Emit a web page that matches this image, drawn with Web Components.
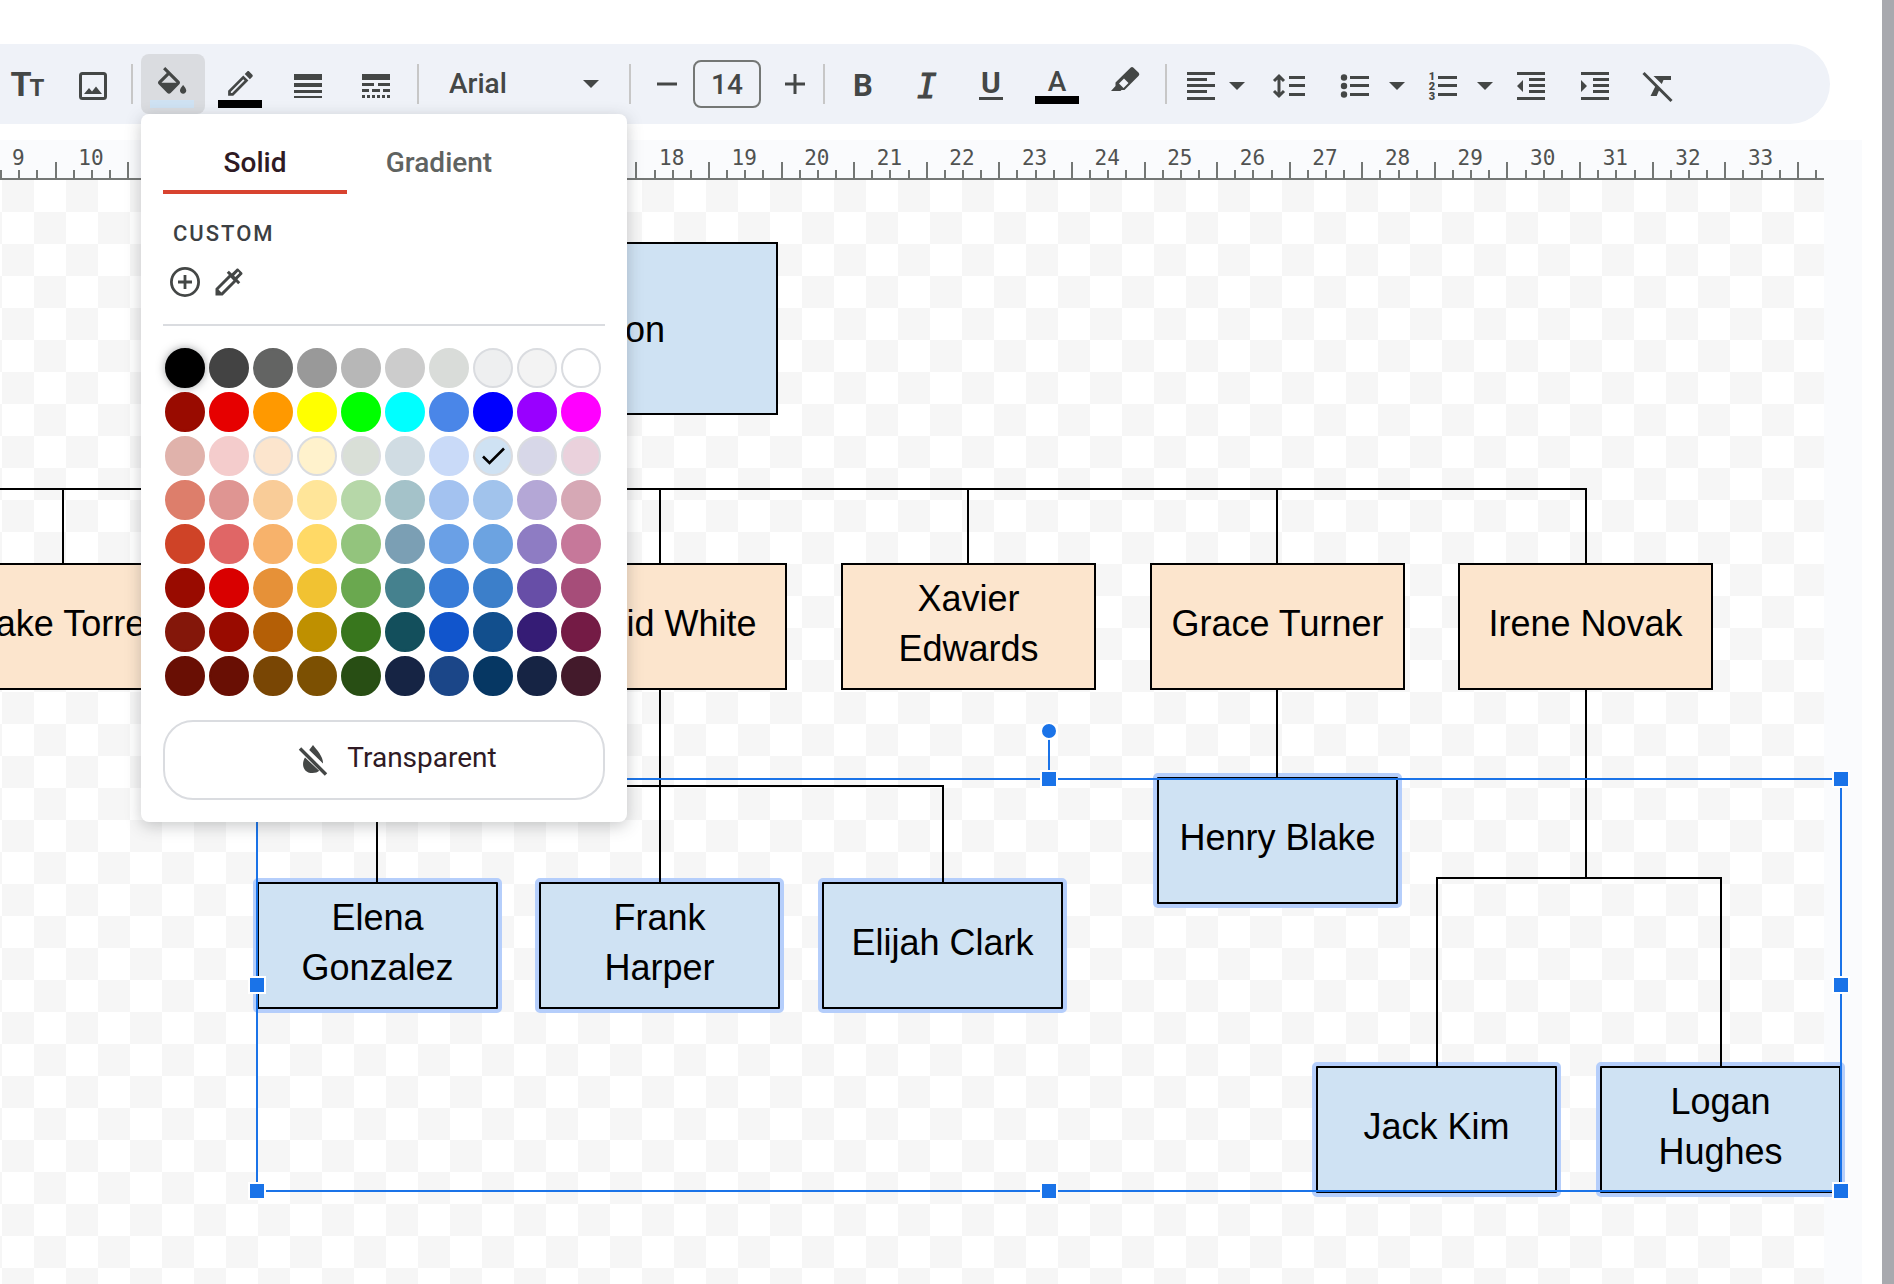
<!DOCTYPE html>
<html lang="en">
<head>
<meta charset="utf-8" />
<meta name="viewport" content="width=device-width, initial-scale=1" />
<title>Org chart drawing</title>
<style>
  body {
    margin: 0;
    font-family: Roboto, sans-serif;
    color: #444746;
    background: #fff;
  }
</style>
</head>
<body>
<drawing-app>
  <tool-bar slot="toolbar">
    <tool-group class="first">
      <tool-button icon="textsize" label="Text size"></tool-button>
      <tool-button icon="image" label="Insert image"></tool-button>
    </tool-group>
    <tool-group class="spaced">
      <tool-button icon="fill" label="Fill color" active></tool-button>
      <tool-button icon="pencil" label="Border color"></tool-button>
      <tool-button icon="weight" label="Border weight"></tool-button>
      <tool-button icon="dash" label="Border dash"></tool-button>
    </tool-group>
    <tool-group><font-picker></font-picker></tool-group>
    <tool-group><font-size></font-size></tool-group>
    <tool-group>
      <tool-button icon="bold" label="Bold"></tool-button>
      <tool-button icon="italic" label="Italic"></tool-button>
      <tool-button icon="underline" label="Underline"></tool-button>
      <tool-button class="wide" icon="textcolor" label="Text color"></tool-button>
      <tool-button class="wide" icon="highlight" label="Highlight color"></tool-button>
    </tool-group>
    <tool-group class="last">
      <tool-button class="narrow" icon="align" label="Align"></tool-button>
      <tool-button class="arrow" icon="arrow" label="Align options"></tool-button>
      <tool-button class="push" icon="spacing" label="Line spacing"></tool-button>
      <tool-button class="narrow near" icon="bullets" label="Bulleted list"></tool-button>
      <tool-button class="arrow near" icon="arrow" label="Bullet options"></tool-button>
      <tool-button class="narrow far" icon="numbers" label="Numbered list"></tool-button>
      <tool-button class="arrow near" icon="arrow" label="Number options"></tool-button>
      <tool-button class="near" icon="outdent" label="Decrease indent"></tool-button>
      <tool-button icon="indent" label="Increase indent"></tool-button>
      <tool-button icon="clear" label="Clear formatting"></tool-button>
    </tool-group>
  </tool-bar>

  <ruler-strip slot="ruler" from="9" to="33" covered="11 17"></ruler-strip>

  <drawing-board slot="board">
    <org-node box="512 62 266 173" fill="#cfe2f3" root>on</org-node>
    <org-node box="-64 383 255 127">Blake Torres</org-node>
    <org-node box="532 383 255 127">David White</org-node>
    <org-node box="841 383 255 127">Xavier<br />Edwards</org-node>
    <org-node box="1150 383 255 127">Grace Turner</org-node>
    <org-node box="1458 383 255 127">Irene Novak</org-node>
    <org-node box="257 702 241 127" fill="#cfe2f3" selected>Elena<br />Gonzalez</org-node>
    <org-node box="539 702 241 127" fill="#cfe2f3" selected>Frank<br />Harper</org-node>
    <org-node box="822 702 241 127" fill="#cfe2f3" selected>Elijah Clark</org-node>
    <org-node box="1157 597 241 127" fill="#cfe2f3" selected>Henry Blake</org-node>
    <org-node box="1316 886 241 127" fill="#cfe2f3" selected>Jack Kim</org-node>
    <org-node box="1600 886 241 127" fill="#cfe2f3" selected>Logan<br />Hughes</org-node>
    <selection-frame slot="selection"></selection-frame>
  </drawing-board>

  <color-popup slot="popup"></color-popup>
</drawing-app>

<script>
const INK = "#444746";

// toolbar icons, all on a 48 x 56 frame
const icons = {
  textsize: `<text x="18" y="40" font-size="34" font-weight="700">T</text>
    <text x="34" y="40" font-size="24" font-weight="700">T</text>`,
  image: `<rect x="11.500" y="17.500" width="25" height="25" rx="2" fill="none" stroke="${INK}" stroke-width="3"/>
    <path d="M15 38l5-6 3 3.500 4-5 6 7.500z"/>`,
  fill: `<path transform="translate(4.300 11) scale(1.570)" d="M16.560 8.940L7.620 0 6.210 1.410l2.380 2.380-5.150 5.150c-.59.59-.59 1.540 0 2.120l5.500 5.500c.29.29.68.44 1.060.44s.77-.15 1.060-.44l5.500-5.500c.59-.58.59-1.530 0-2.120zM5.210 10L10 5.210 14.790 10H5.210zM19 11.500s-2 2.170-2 3.500c0 1.100.9 2 2 2s2-.9 2-2c0-1.330-2-3.500-2-3.500z"/>
    <rect x="1" y="44" width="44" height="8" fill="#cfe2f3"/>`,
  pencil: `<path transform="translate(7 11) scale(1.370)" d="M14.060 9.020l.92.92L5.920 19H5v-.92l9.060-9.060M17.660 3c-.25 0-.51.1-.7.29l-1.830 1.830 3.750 3.750 1.830-1.830c.39-.39.39-1.020 0-1.410l-2.340-2.340c-.2-.2-.45-.29-.71-.29zm-3.600 3.190L3 17.250V21h3.750L17.810 9.940l-3.750-3.750z"/>
    <rect x="1" y="44" width="44" height="8" fill="#000"/>`,
  weight: `<path d="M9 18h28v6H9zM9 27h28v4H9zM9 34h28v3H9zM9 40h28v2H9z"/>`,
  dash: `<path d="M9 18h28v6H9zM9 27h12v3H9zM25 27h12v3H25zM9 33h7v3H9zM19 33h8v3h-8zM30 33h7v3h-7zM9 39h3v3H9zM14 39h3v3h-3zM19 39h3v3h-3zM24 39h3v3h-3zM29 39h3v3h-3zM34 39h3v3h-3z"/>`,
  bold: `<text x="24" y="40" font-size="31" font-weight="700">B</text>`,
  italic: `<text x="24" y="42" font-size="33" font-style="italic" font-family="DejaVu Sans Mono" stroke="${INK}" stroke-width="1">I</text>`,
  underline: `<text x="24" y="37" font-size="30" font-weight="700">U</text>
    <rect x="12" y="41" width="24" height="3"/>`,
  textcolor: `<text x="24" y="35" font-size="28" font-weight="500">A</text>
    <rect x="2" y="40" width="44" height="8" fill="#000"/>`,
  highlight: `<path fill-rule="evenodd" d="M29.500 11.700q1.500-1.300 3 0l5.200 5q1.300 1.500 0 3L23.500 34h-3l-1 1H10l4.500-5v-3.500zM18 27.500l4.500 4.500 5-5-4.500-4.500z"/>`,
  align: `<path d="M10 16h28v3H10zM10 22h20v3H10zM10 28h28v3H10zM10 34h20v3H10zM10 41h28v3H10z"/>`,
  spacing: `<path d="M24 20h16v3H24zM24 28h16v3H24zM24 37h16v3H24z"/>
    <path d="M9 25l5-5 5 5M9 35l5 5 5-5M14 20v20" fill="none" stroke="${INK}" stroke-width="3"/>`,
  bullets: `<circle cx="13" cy="21.500" r="3.200"/><circle cx="13" cy="30" r="3.200"/><circle cx="13" cy="38.500" r="3.200"/>
    <path d="M19 20h19v3H19zM19 28h19v3H19zM19 37h19v3H19z"/>`,
  numbers: `<g font-size="11" font-weight="900"><text x="13" y="24">1</text><text x="13" y="34">2</text><text x="13" y="44">3</text></g>
    <path d="M19 20h19v3H19zM19 28h19v3H19zM19 37h19v3H19z"/>`,
  outdent: `<path d="M10 16h28v3H10zM22 22h16v3H22zM22 28h16v3H22zM22 34h16v3H22zM10 41h28v3H10zM16 24v12l-6-6z"/>`,
  indent: `<path d="M10 16h28v3H10zM22 22h16v3H22zM22 28h16v3H22zM22 34h16v3H22zM10 41h28v3H10zM10 24v12l6-6z"/>`,
  clear: `<path d="M18.500 20H36v4h-7.500l-1.700 4zM21 29l3.700 3.700-3 7.300H15.500z"/>
    <path d="M8.500 17l28 28" stroke="${INK}" stroke-width="3"/>`,
  arrow: `<path d="M16 26h16l-8 8z"/>`,
};

class BaseElement extends HTMLElement {
  connectedCallback() {
    if (this.shadowRoot) return;
    this.attachShadow({ mode: "open" });
    const template = document.createElement("template");
    template.innerHTML = this.render();
    this.shadowRoot.appendChild(template.content.cloneNode(true));
  }
}

class DrawingApp extends BaseElement {
  render() {
    return `
    <style>
      :host {
        display: flex;
        box-sizing: border-box;
        min-height: 100vh;
        position: relative;
        overflow: hidden;
        border-right: 12px solid #a8a9ae;
      }
      main { flex: 1; min-width: 0; display: flex; flex-direction: column; padding-top: 44px; }
      .work {
        flex: 1;
        display: flex;
        flex-direction: column;
        margin: 16px 20px 0 0;
        padding-right: 38px;
        background: #fafbfd;
      }
    </style>
    <main>
      <slot name="toolbar"></slot>
      <div class="work"><slot name="ruler"></slot><slot name="board"></slot></div>
    </main>
    <slot name="popup"></slot>`;
  }
}

class ToolBar extends BaseElement {
  render() {
    return `
    <style>
      :host {
        display: flex;
        align-items: center;
        height: 80px;
        margin-right: 52px;
        border-radius: 0 40px 40px 0;
        background: #eff2f8;
      }
      ::slotted(*) { margin-right: 6px; }
      ::slotted(.first) { --gap: 2px; margin-left: -5px; }
      ::slotted(.spaced) { --gap: 4px; padding-left: 2px; }
    </style>
    <slot></slot>`;
  }
}

class ToolGroup extends BaseElement {
  render() {
    return `
    <style>
      :host { display: flex; align-items: center; }
      .items { display: flex; align-items: center; gap: var(--gap, 0); }
      .rule { width: 2px; height: 40px; margin-left: 6px; background: #c7c7c7; }
      :host(.spaced) .rule { margin-left: 8px; }
      :host(.last) .rule { display: none; }
      ::slotted(.near) { margin-left: 6px; }
      ::slotted(.far) { margin-left: 10px; }
      ::slotted(.push) { margin-left: 12px; }
    </style>
    <div class="items"><slot></slot></div><div class="rule"></div>`;
  }
}

class ToolButton extends BaseElement {
  render() {
    return `
    <style>
      :host { display: block; width: 64px; }
      :host(.wide) { width: 68px; }
      :host(.narrow) { width: 56px; }
      :host(.arrow) { width: 16px; }
      button {
        display: flex;
        align-items: center;
        justify-content: center;
        width: 100%;
        height: 60px;
        padding: 0;
        border: 0;
        border-radius: 8px;
        background: none;
        font-family: inherit;
        cursor: pointer;
      }
      :host([active]) button { background: #dadce0; }
      svg { flex: none; width: 48px; height: 56px; fill: ${INK}; text-anchor: middle; }
    </style>
    <button type="button" aria-label="${this.getAttribute("label")}">
      <svg viewBox="0 0 48 56" aria-hidden="true">${icons[this.getAttribute("icon")]}</svg>
    </button>`;
  }
}

class FontPicker extends BaseElement {
  render() {
    return `
    <style>
      :host { display: flex; align-items: center; width: 198px; }
      label { display: grid; align-items: center; width: 100%; }
      select {
        grid-area: 1 / 1;
        appearance: none;
        height: 56px;
        padding: 0 48px 2px 24px;
        border: 0;
        background: none;
        color: ${INK};
        font: 500 28px Roboto, sans-serif;
      }
      svg { grid-area: 1 / 1; justify-self: end; margin-right: 24px; width: 16px; height: 8px; fill: ${INK}; pointer-events: none; }
    </style>
    <label>
      <select aria-label="Font"><option>Arial</option></select>
      <svg viewBox="0 0 16 8"><path d="M0 0h16l-8 8z"/></svg>
    </label>`;
  }
}

class FontSize extends BaseElement {
  render() {
    return `
    <style>
      :host { display: flex; align-items: center; gap: 4px; width: 172px; padding-left: 8px; }
      button { flex: none; width: 44px; height: 44px; padding: 12px; border: 0; background: none; }
      svg { display: block; width: 20px; height: 20px; fill: ${INK}; }
      input {
        box-sizing: border-box;
        width: 68px;
        height: 48px;
        margin-right: 8px;
        padding: 0;
        border: 2px solid #747775;
        border-radius: 8px;
        background: none;
        color: ${INK};
        text-align: center;
        font: 500 28px Roboto, sans-serif;
      }
    </style>
    <button type="button" aria-label="Decrease font size"><svg viewBox="0 0 20 20"><path d="M0 8.500h20v3H0z"/></svg></button>
    <input type="text" value="14" aria-label="Font size" />
    <button type="button" aria-label="Increase font size"><svg viewBox="0 0 20 20"><path d="M0 8.500h8.500V0h3v8.500H20v3h-8.500V20h-3v-8.500H0z"/></svg></button>`;
  }
}

class RulerStrip extends BaseElement {
  render() {
    const from = Number(this.getAttribute("from"));
    const to = Number(this.getAttribute("to"));
    // numbers that an open popup lies over are left out
    const [first, last] = this.getAttribute("covered").split(" ").map(Number);
    let cells = "";
    for (let n = from; n <= to; n++) {
      const number = n >= first && n <= last ? "" : n;
      cells += `<div class="cell"><span>${number}</span><div class="ticks"><i></i><i></i><i></i><i></i></div></div>`;
    }
    return `
    <style>
      :host { display: block; height: 40px; overflow: hidden; }
      .row {
        display: flex;
        box-sizing: border-box;
        height: 40px;
        margin-left: -18px;
        border-bottom: 2px solid #747775;
      }
      .cell { flex: 1; min-width: 0; display: grid; grid-template-rows: 38px; }
      .cell.end { flex: 0 0 27px; }
      span {
        grid-area: 1 / 1;
        text-align: center;
        font: 21px/37px "DejaVu Sans Mono", monospace;
        color: #505251;
      }
      .ticks { grid-area: 1 / 1; display: flex; align-items: flex-end; }
      i { flex: 1; box-sizing: border-box; height: 8px; border-left: 2px solid #747775; }
      i:first-child { height: 16px; }
      .end i { flex: 0 0 18px; }
    </style>
    <div class="row">${cells}<div class="cell end"><div class="ticks"><i></i><i></i></div></div></div>`;
  }
}

class DrawingBoard extends BaseElement {
  render() {
    // connectors run from parent to child, in board coordinates
    return `
    <style>
      :host {
        display: block;
        flex: 1;
        position: relative;
        background: conic-gradient(#fff 25%, #f6f6f6 0 50%, #fff 0 75%, #f6f6f6 0) 2px 0 / 64px 64px;
      }
      svg { position: absolute; top: 0; left: 0; width: 100%; height: 100%; fill: none; stroke: #000; stroke-width: 2; pointer-events: none; }
    </style>
    <slot></slot>
    <svg aria-hidden="true">
      <path d="M0 309H1587"/>
      <path d="M63 309V384M660 309V384M968 309V384M1277 309V384M1586 309V384"/>
      <path d="M377 703V606H943V703M660 509V703"/>
      <path d="M1277 509V598M1586 509V698M1437 887V698H1721V887"/>
    </svg>
    <slot name="selection"></slot>`;
  }
}

class OrgNode extends BaseElement {
  render() {
    const [x, y, w, h] = this.getAttribute("box").split(" ");
    const fill = this.getAttribute("fill") || "#fce5cd";
    return `
    <style>
      :host {
        position: absolute;
        left: ${x}px;
        top: ${y}px;
        width: ${w}px;
        height: ${h}px;
        box-sizing: border-box;
        display: flex;
        align-items: center;
        justify-content: center;
        padding-bottom: 5px;
        border: 2px solid #000;
        background: ${fill};
        color: #000;
        font: 36px/50px "Liberation Sans", Arial, sans-serif;
        text-align: center;
        white-space: nowrap;
      }
      :host([root]) { padding: 3px 0 0; }
      :host([selected])::before {
        content: "";
        position: absolute;
        inset: -6px;
        border: 4px solid #b5cefb;
        border-radius: 5px;
      }
    </style>
    <div><slot></slot></div>`;
  }
}

class SelectionFrame extends BaseElement {
  render() {
    const handles = ["0 0", "50% 0", "100% 0", "0 50%", "100% 50%", "0 100%", "50% 100%", "100% 100%"];
    return `
    <style>
      :host {
        position: absolute;
        left: 256px;
        top: 598px;
        width: 1586px;
        height: 414px;
        box-sizing: border-box;
        border: 2px solid #1a73e8;
      }
      /* runs along the middle of the border */
      .track { position: absolute; inset: -1px; }
      .handle, .knob {
        position: absolute;
        width: 14px;
        height: 14px;
        margin: -9px;
        border: 2px solid #fff;
        background: #1a73e8;
      }
      .stem { position: absolute; left: 50%; top: -40px; width: 2px; height: 32px; margin-left: -1px; background: #1a73e8; }
      .knob { left: 50%; top: -48px; border-radius: 50%; }
    </style>
    <div class="track">
      <div class="stem"></div><div class="knob"></div>
      ${handles.map((h) => {
        const [l, t] = h.split(" ");
        return `<div class="handle" style="left:${l};top:${t}"></div>`;
      }).join("")}
    </div>`;
  }
}

const palette = [
  "#000000 #434343 #636463 #999999 #b7b7b7 #cccccc #d9dcd9 #eeeff0 #f3f3f3 #ffffff",
  "#990b00 #e60000 #ff9900 #ffff00 #00ff00 #00ffff #4a86e8 #0000ff #9900ff #ff00ff",
  "#e0b2ab #f4cccc #fce5cd #fff2cc #d9dfd7 #d0dce3 #c9daf8 #cfe2f3 #d7d7e8 #ead1dc",
  "#dd7e6b #df9592 #f9cc98 #ffe599 #b6d7a8 #a4c2c9 #a3c2f0 #a1c3ec #b4a7d6 #d6a8b5",
  "#cf4327 #e06666 #f7b26b #ffd966 #93c47d #7b9fb4 #6aa0e6 #6ca3e1 #8e7cc3 #c6789a",
  "#990b00 #d90000 #e69138 #f1c232 #6aa84f #45818e #387cd8 #3c7fca #674ea7 #a64d79",
  "#84170a #990b00 #b45f06 #bf9000 #38761d #134f5c #1155cc #124f8d #351c75 #741b45",
  "#690f04 #690f04 #794604 #7c5002 #284e14 #162444 #1b4688 #063763 #162444 #431a2b",
].map((row) => row.split(" "));
const outlined = ["#eeeff0", "#f3f3f3", "#ffffff", "#fce5cd", "#fff2cc", "#d9dfd7", "#cfe2f3", "#d7d7e8", "#ead1dc"];

class ColorSwatch extends BaseElement {
  render() {
    const color = this.getAttribute("color");
    const ring = outlined.includes(color) ? "#dadce0" : color;
    const check = this.hasAttribute("checked")
      ? `<svg viewBox="0 0 36 36"><path d="M8 18.500l6.500 6.500L29 10.500"/></svg>`
      : "";
    return `
    <style>
      :host { display: block; }
      button {
        display: block;
        box-sizing: border-box;
        width: 40px;
        height: 40px;
        padding: 0;
        border: 2px solid ${ring};
        border-radius: 50%;
        background: ${color};
      }
      :host([glow]) button { box-shadow: 0 0 8px rgba(60, 64, 67, 0.5); }
      svg { display: block; fill: none; stroke: #000; stroke-width: 2.600; }
    </style>
    <button type="button" aria-label="${color}">${check}</button>`;
  }
}

class ColorPopup extends BaseElement {
  render() {
    const swatches = palette.flat().map((c) =>
      `<color-swatch color="${c}"${c === "#cfe2f3" ? " checked" : ""}${c === "#000000" ? " glow" : ""}></color-swatch>`
    ).join("");
    return `
    <style>
      :host {
        position: absolute;
        top: 114px;
        left: 141px;
        box-sizing: border-box;
        width: 486px;
        padding: 20px 22px 22px;
        border-radius: 8px;
        background: #fff;
        box-shadow: 0 4px 16px rgba(60, 64, 67, 0.28);
      }
      button { padding: 0; border: 0; background: none; font-family: inherit; cursor: pointer; }
      .tabs { display: flex; }
      .tabs button {
        box-sizing: border-box;
        width: 184px;
        height: 60px;
        border-bottom: 4px solid transparent;
        font-size: 28px;
        font-weight: 500;
        color: #5f6361;
      }
      .tabs button[aria-selected="true"] { border-color: #d8432f; color: #2f1a24; }
      h2 { margin: 25px 0 0 10px; font-size: 22px; line-height: 30px; font-weight: 500; letter-spacing: 2px; color: #3c4043; }
      .custom { display: flex; gap: 8px; margin: 15px 0 24px; padding-left: 4px; }
      .custom svg { display: block; width: 36px; height: 36px; fill: ${INK}; }
      hr { margin: 0; border: 0; border-top: 2px solid #dadce0; }
      .grid { display: grid; grid-template-columns: repeat(10, 40px); gap: 4px; margin: 22px 0 24px 2px; }
      .transparent {
        display: flex;
        align-items: center;
        justify-content: center;
        gap: 16px;
        box-sizing: border-box;
        width: 100%;
        height: 80px;
        padding: 0 0 6px 24px;
        border: 2px solid #dadce0;
        border-radius: 30px;
        color: #2f1a24;
        font-size: 28px;
        font-weight: 400;
      }
      .transparent svg { width: 36px; height: 36px; margin-top: 6px; fill: ${INK}; }
    </style>
    <div class="tabs" role="tablist">
      <button type="button" role="tab" aria-selected="true">Solid</button>
      <button type="button" role="tab" aria-selected="false">Gradient</button>
    </div>
    <h2>CUSTOM</h2>
    <div class="custom">
      <button type="button" aria-label="Add custom color">
        <svg viewBox="0 0 36 36"><g fill="none" stroke="${INK}" stroke-width="2.800"><circle cx="18" cy="18" r="13.600"/><path d="M11 18h14M18 11v14"/></g></svg>
      </button>
      <button type="button" aria-label="Pick color">
        <svg viewBox="0 0 24 24"><path d="M20.710 5.630l-2.340-2.340c-.39-.39-1.020-.39-1.410 0l-3.120 3.120-1.930-1.910-1.410 1.410 1.420 1.420L3 16.250V21h4.750l8.920-8.920 1.420 1.420 1.410-1.410-1.920-1.920 3.120-3.120c.4-.4.4-1.030.01-1.420zM6.920 19L5 17.080l8.060-8.060 1.920 1.920L6.920 19z"/><path d="M15.800 8.200l2.700-2.700" stroke="#fff" stroke-width="1.200"/></svg>
      </button>
    </div>
    <hr />
    <div class="grid">${swatches}</div>
    <button type="button" class="transparent">
      <svg viewBox="0 0 36 36"><path d="M10 15.500C6 22 8 31 17.500 31c3 0 5-.8 6.700-2.200zM18 3l-3.800 5L28 21.500C28.500 15 22 8 18 3z"/><path d="M5 6.500l26 26" stroke="${INK}" stroke-width="3.400"/></svg>
      <span>Transparent</span>
    </button>`;
  }
}

customElements.define("drawing-app", DrawingApp);
customElements.define("tool-bar", ToolBar);
customElements.define("tool-group", ToolGroup);
customElements.define("tool-button", ToolButton);
customElements.define("font-picker", FontPicker);
customElements.define("font-size", FontSize);
customElements.define("ruler-strip", RulerStrip);
customElements.define("drawing-board", DrawingBoard);
customElements.define("org-node", OrgNode);
customElements.define("selection-frame", SelectionFrame);
customElements.define("color-swatch", ColorSwatch);
customElements.define("color-popup", ColorPopup);
</script>
</body>
</html>
